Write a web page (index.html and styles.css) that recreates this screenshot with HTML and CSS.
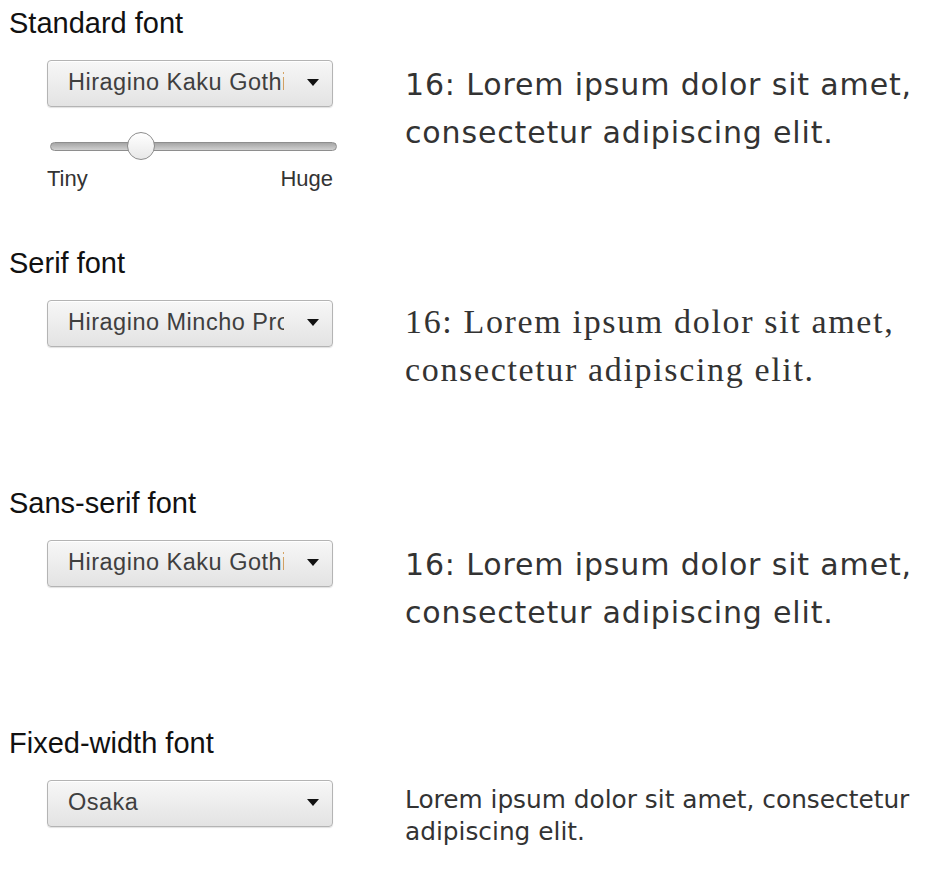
FILE: index.html
```html
<!DOCTYPE html>
<html lang="en">
<head>
<meta charset="utf-8">
<title>Fonts</title>
<link rel="stylesheet" href="styles.css">
</head>
<body>
<div class="page">
  <section class="font-section">
    <h2 class="section-title">Standard font</h2>
    <div class="font-row">
      <div class="controls">
        <div class="select"><span class="select-value">Hiragino Kaku Gothic ProN</span><span class="select-arrow"></span></div>
        <div class="slider">
          <div class="slider-track"></div>
          <div class="slider-thumb"></div>
        </div>
        <div class="slider-labels"><span>Tiny</span><span>Huge</span></div>
      </div>
      <p class="sample sample-sans">16: Lorem ipsum dolor sit amet, consectetur adipiscing elit.</p>
    </div>
  </section>

  <section class="font-section">
    <h2 class="section-title">Serif font</h2>
    <div class="font-row">
      <div class="controls">
        <div class="select"><span class="select-value">Hiragino Mincho ProN</span><span class="select-arrow"></span></div>
      </div>
      <p class="sample sample-serif">16: Lorem ipsum dolor sit amet, consectetur adipiscing elit.</p>
    </div>
  </section>

  <section class="font-section">
    <h2 class="section-title">Sans-serif font</h2>
    <div class="font-row">
      <div class="controls">
        <div class="select"><span class="select-value">Hiragino Kaku Gothic ProN</span><span class="select-arrow"></span></div>
      </div>
      <p class="sample sample-sans">16: Lorem ipsum dolor sit amet, consectetur adipiscing elit.</p>
    </div>
  </section>

  <section class="font-section font-section-last">
    <h2 class="section-title">Fixed-width font</h2>
    <div class="font-row">
      <div class="controls">
        <div class="select"><span class="select-value">Osaka</span><span class="select-arrow"></span></div>
      </div>
      <p class="sample sample-mono">Lorem ipsum dolor sit amet, consectetur adipiscing elit.</p>
    </div>
  </section>
</div>
</body>
</html>
```

FILE: styles.css
```css
body {
  margin: 0;
  background: #ffffff;
  font-family: "Liberation Sans", Arial, sans-serif;
}

.page {
  padding: 7px 0 0 9px;
}

.font-section {
  height: 240px;
}

.font-section-last {
  height: auto;
}

.section-title {
  margin: 0;
  font-size: 29px;
  line-height: 32px;
  font-weight: normal;
  color: #111111;
}

.font-row {
  display: flex;
  align-items: flex-start;
  gap: 72px;
  margin-top: 21px;
  padding-left: 38px;
}

.controls {
  width: 286px;
  flex: none;
}

.select {
  box-sizing: border-box;
  height: 47px;
  display: flex;
  align-items: center;
  padding: 0 12px 2px 20px;
  border: 1px solid #b4b4b4;
  border-radius: 4px;
  background: linear-gradient(#f7f7f7, #e3e3e3);
  box-shadow: inset 0 1px 0 #ffffff, 0 1px 1px rgba(0, 0, 0, 0.12);
  font-size: 23.5px;
  letter-spacing: 0.5px;
  color: #3f3f3f;
}

.select-value {
  flex: none;
  width: 216px;
  overflow: hidden;
  white-space: nowrap;
}

.select-arrow {
  flex: none;
  margin-left: 23px;
  width: 0;
  height: 0;
  border-left: 6.5px solid transparent;
  border-right: 6.5px solid transparent;
  border-top: 7px solid #111111;
}

.slider {
  position: relative;
  box-sizing: border-box;
  width: 287px;
  height: 30px;
  margin: 24px 0 0 3px;
  padding-top: 11px;
}

.slider-track {
  box-sizing: border-box;
  height: 9px;
  border: 1px solid #8e8e8e;
  border-radius: 5px;
  background: linear-gradient(#a5a5a5, #d0d0d0);
}

.slider-thumb {
  position: absolute;
  left: 77px;
  top: 1px;
  box-sizing: border-box;
  width: 28px;
  height: 28px;
  border: 1px solid #8d8d8d;
  border-radius: 50%;
  background: linear-gradient(#ffffff, #e8e8e8);
}

.slider-labels {
  display: flex;
  justify-content: space-between;
  margin-top: 5px;
  font-size: 22px;
  line-height: 26px;
  color: #333333;
}

.sample {
  flex: 1;
  min-width: 0;
  margin: 1px 0 0;
  color: #333333;
  font-family: "DejaVu Sans", sans-serif;
  font-size: 30px;
  line-height: 48px;
  letter-spacing: 0.85px;
}

.sample-serif {
  margin-top: -2px;
  font-family: "Liberation Serif", serif;
  font-size: 34px;
  letter-spacing: 1.65px;
}

.sample-mono {
  margin-top: 4px;
  font-size: 24.8px;
  line-height: 32px;
  letter-spacing: 0;
}
```
